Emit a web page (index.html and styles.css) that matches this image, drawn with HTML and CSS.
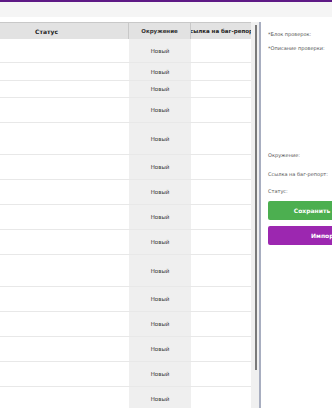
FILE: index.html
```html
<!DOCTYPE html>
<html lang="ru">
<head>
    <meta charset="UTF-8">
    <title>Проверки</title>
    <link rel="stylesheet" href="styles.css">
</head>
<body>

<div class="topbar"></div>

<div class="content">
    <div class="grid">
        <div class="grid-inner">
            <div class="row head">
                <div class="cell">Статус</div>
                <div class="cell env">Окружение</div>
                <div class="cell link">Ссылка на баг-репорт</div>
            </div>
            <div class="row h24"><div class="cell"></div><div class="cell env">Новый</div><div class="cell"></div></div>
            <div class="row h18"><div class="cell"></div><div class="cell env">Новый</div><div class="cell"></div></div>
            <div class="row h17"><div class="cell"></div><div class="cell env">Новый</div><div class="cell"></div></div>
            <div class="row h25"><div class="cell"></div><div class="cell env">Новый</div><div class="cell"></div></div>
            <div class="row h32"><div class="cell"></div><div class="cell env">Новый</div><div class="cell"></div></div>
            <div class="row h25"><div class="cell"></div><div class="cell env">Новый</div><div class="cell"></div></div>
            <div class="row h25"><div class="cell"></div><div class="cell env">Новый</div><div class="cell"></div></div>
            <div class="row h25"><div class="cell"></div><div class="cell env">Новый</div><div class="cell"></div></div>
            <div class="row h25"><div class="cell"></div><div class="cell env">Новый</div><div class="cell"></div></div>
            <div class="row h32"><div class="cell"></div><div class="cell env">Новый</div><div class="cell"></div></div>
            <div class="row h25"><div class="cell"></div><div class="cell env">Новый</div><div class="cell"></div></div>
            <div class="row h25"><div class="cell"></div><div class="cell env">Новый</div><div class="cell"></div></div>
            <div class="row h25"><div class="cell"></div><div class="cell env">Новый</div><div class="cell"></div></div>
            <div class="row h25"><div class="cell"></div><div class="cell env">Новый</div><div class="cell"></div></div>
            <div class="row h25"><div class="cell"></div><div class="cell env">Новый</div><div class="cell"></div></div>
        </div>
    </div>

    <div class="track">
        <div class="thumb"></div>
    </div>

    <div class="panel">
        <label class="lbl first">*Блок проверок:</label>
        <label class="lbl">*Описание проверки:</label>
        <div class="desc"></div>
        <label class="lbl">Окружение:</label>
        <label class="lbl gap">Ссылка на баг-репорт:</label>
        <label class="lbl gap-s">Статус:</label>
        <button class="btn btn-save">Сохранить</button>
        <button class="btn btn-import">Импорт</button>
    </div>
</div>

</body>
</html>
```

FILE: styles.css
```css
* {
    box-sizing: border-box;
}

body {
    margin: 0;
    font-family: 'DejaVu Sans', sans-serif;
    background-color: white;
    overflow: hidden;
    height: 408px;
}

.topbar {
    border-top: 2px solid #5e1a86;
    height: 17px;
    background-color: #f5f5f5;
}

.content {
    display: flex;
    margin-top: 5px;
    height: 386px;
}

.grid {
    width: 251px;
    flex-shrink: 0;
    overflow: hidden;
}

.grid-inner {
    margin-left: -35px;
    width: 286px;
}

.row {
    display: grid;
    grid-template-columns: 164px 62px 60px;
    border-bottom: 1px solid #e8e8e8;
}

.row.head {
    height: 17px;
    background-color: #e2e2e2;
    border-top: 1px solid #c8c8c8;
    border-bottom: none;
    font-weight: bold;
    font-size: 6px;
    color: #222;
}

.head .cell {
    background: none;
    border-right: 1px solid #c8c8c8;
}

.head .cell:last-child {
    border-right: none;
}

.head .link {
    font-size: 5.5px;
}

.cell {
    display: flex;
    align-items: center;
    justify-content: center;
    overflow: hidden;
    white-space: nowrap;
}

.env {
    background-color: #efefef;
    font-size: 5.5px;
    color: #333;
}

.h17 { height: 17px; }
.h18 { height: 18px; }
.h24 { height: 24px; }
.h25 { height: 25px; }
.h32 { height: 32px; }

.track {
    width: 10px;
    flex-shrink: 0;
    background-color: #f0f0f0;
    border-right: 2px solid #a8aec0;
    padding: 3px 0 0 4px;
}

.thumb {
    width: 2px;
    height: 345px;
    background-color: #7a7a7a;
}

.panel {
    flex: 1;
    padding: 8px 0 0 7px;
    display: flex;
    flex-direction: column;
    align-items: flex-start;
    overflow: hidden;
}

.lbl {
    font-size: 5px;
    line-height: 8px;
    color: #555;
    white-space: nowrap;
}

.lbl.first {
    margin-bottom: 6px;
}

.desc {
    height: 99px;
}

.lbl.gap {
    margin-top: 11px;
}

.lbl.gap-s {
    margin-top: 9px;
}

.btn {
    border: none;
    border-radius: 2px;
    color: white;
    font-family: 'DejaVu Sans', sans-serif;
    font-weight: bold;
    font-size: 6px;
    height: 19px;
    flex-shrink: 0;
    padding: 0;
}

.btn-save {
    margin-top: 6px;
    width: 88px;
    background-color: #4caf50;
}

.btn-import {
    margin-top: 6px;
    width: 112px;
    background-color: #9c27b0;
}
```
